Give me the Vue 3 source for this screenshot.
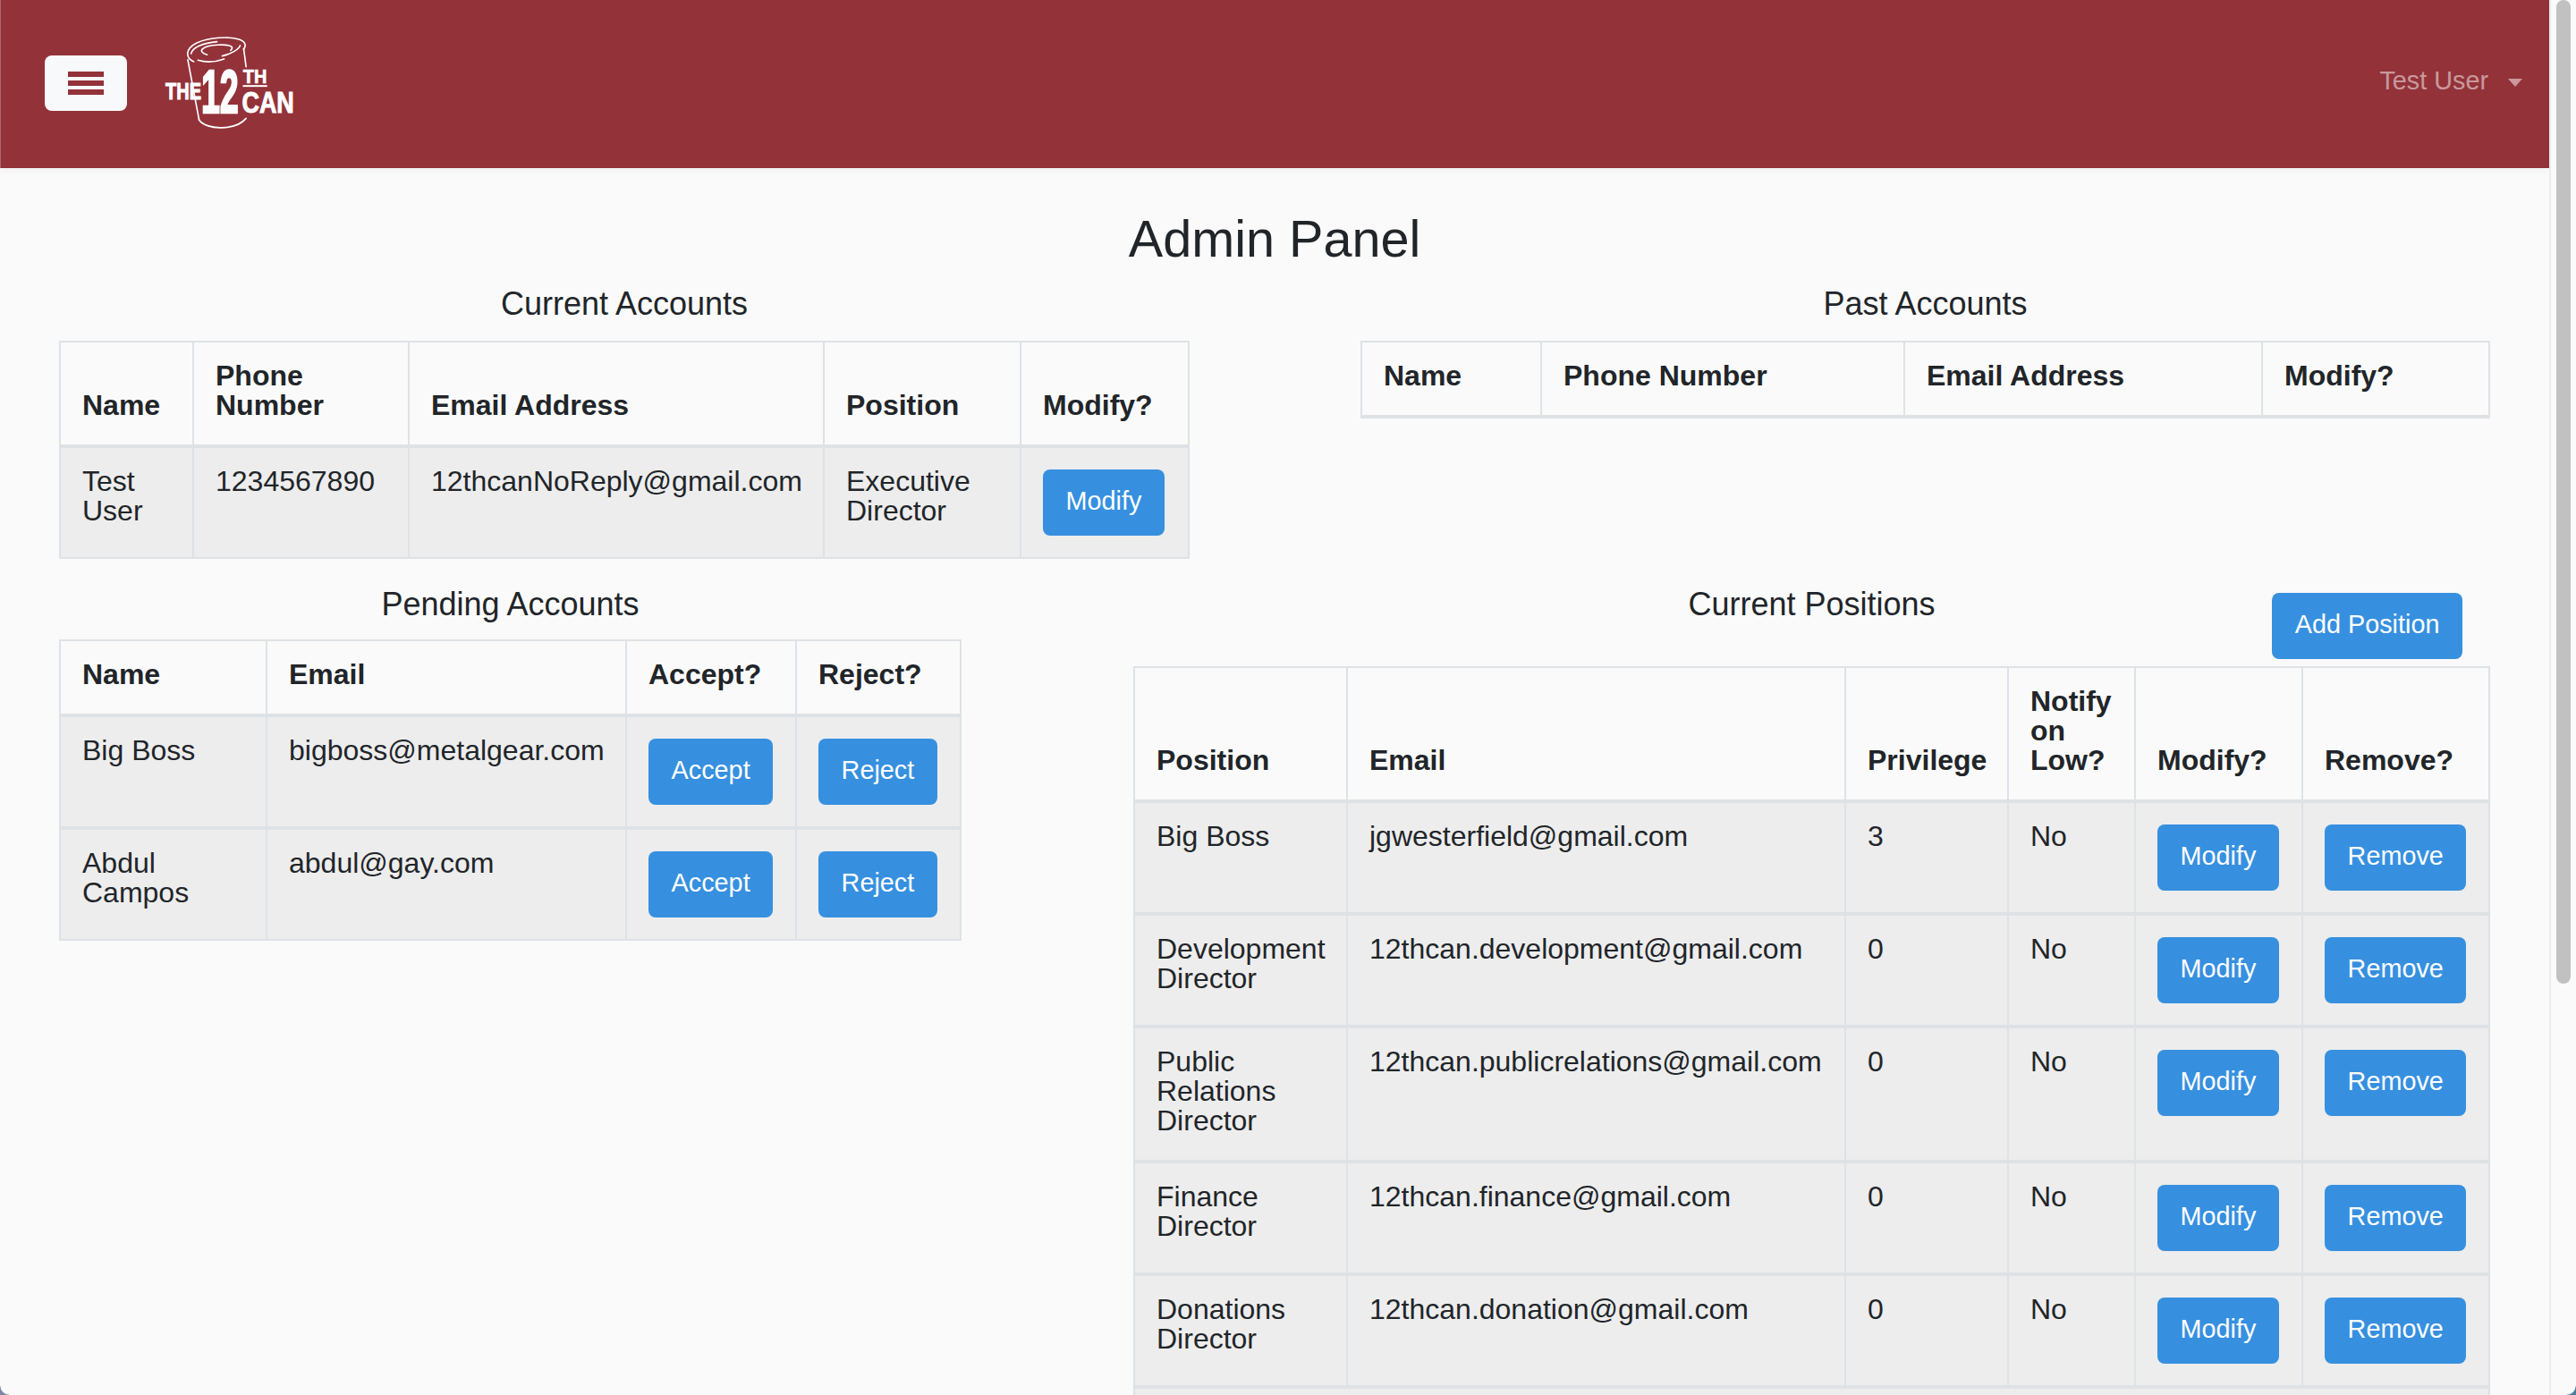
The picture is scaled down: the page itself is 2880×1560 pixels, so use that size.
<script setup>
const current = { cols: [149, 241, 464, 220, 188] }
const past = { cols: [201, 406, 400, 254] }
const pending = {
  cols: [231, 402, 190, 184],
  rows: [
    { name: 'Big Boss', email: 'bigboss@metalgear.com' },
    { name: 'Abdul Campos', email: 'abdul@gay.com' },
  ],
}
const positions = {
  cols: [238, 557, 182, 142, 187, 209],
  rows: [
    { name: 'Big Boss', email: 'jgwesterfield@gmail.com', privilege: 3 },
    { name: 'Development Director', email: '12thcan.development@gmail.com', privilege: 0 },
    { name: 'Public Relations Director', email: '12thcan.publicrelations@gmail.com', privilege: 0 },
    { name: 'Finance Director', email: '12thcan.finance@gmail.com', privilege: 0 },
    { name: 'Donations Director', email: '12thcan.donation@gmail.com', privilege: 0 },
  ],
}
</script>

<template>
  <div class="page">
    <div class="content">
      <header class="topbar">
        <button class="menu-btn" type="button">
          <span></span>
          <span></span>
          <span></span>
        </button>
        <svg class="logo" viewBox="540 110 460 340">
          <g fill="none" stroke="#fff" stroke-width="5" stroke-linecap="round">
            <path d="M650 209C622 197 620 166 660 146C700 128 770 122 805 135C826 144 826 156 818 168" />
            <path d="M641 182C646 162 680 146 728 142" />
            <path d="M695 186C660 176 676 156 730 153C766 151 790 156 774 171" />
            <path d="M664 204C700 215 730 208 752 200" />
            <path d="M746 190C772 184 800 170 806 155" />
            <path d="M630 203L668 405" />
            <path d="M818 165L826 226" />
            <path d="M668 405C690 440 790 442 826 400" />
          </g>
          <g class="logo-text">
            <text transform="translate(555 337) scale(.79 1)" font-size="76" stroke-width="3">THE</text>
            <text transform="translate(675 382) scale(.545 1)" font-size="208" stroke-width="7">12</text>
            <text transform="translate(816 282) scale(.94 1)" font-size="64" stroke-width="2">TH</text>
            <text transform="translate(812 382) scale(.81 1)" font-size="100" stroke-width="3">CAN</text>
          </g>
          <rect x="815" y="288" width="82" height="6" fill="#fff" />
        </svg>
        <div class="user">
          <span>Test User</span>
          <i class="caret"></i>
        </div>
      </header>

      <main class="main">
        <h1 class="title">Admin Panel</h1>

        <div class="row">
          <section>
            <h3 class="heading">Current Accounts</h3>
            <table class="grid">
              <colgroup>
                <col v-for="w in current.cols" :style="{ width: w + 'px' }" />
              </colgroup>
              <thead>
                <tr>
                  <th>Name</th>
                  <th>Phone Number</th>
                  <th>Email Address</th>
                  <th>Position</th>
                  <th>Modify?</th>
                </tr>
              </thead>
              <tbody>
                <tr>
                  <td>Test User</td>
                  <td>1234567890</td>
                  <td>12thcanNoReply@gmail.com</td>
                  <td>Executive Director</td>
                  <td class="action"><button class="btn" type="button">Modify</button></td>
                </tr>
              </tbody>
            </table>
          </section>

          <section>
            <h3 class="heading">Past Accounts</h3>
            <table class="grid">
              <colgroup>
                <col v-for="w in past.cols" :style="{ width: w + 'px' }" />
              </colgroup>
              <thead>
                <tr>
                  <th>Name</th>
                  <th>Phone Number</th>
                  <th>Email Address</th>
                  <th>Modify?</th>
                </tr>
              </thead>
            </table>
          </section>
        </div>

        <div class="row second">
          <section>
            <h3 class="heading">Pending Accounts</h3>
            <table class="grid">
              <colgroup>
                <col v-for="w in pending.cols" :style="{ width: w + 'px' }" />
              </colgroup>
              <thead>
                <tr>
                  <th>Name</th>
                  <th>Email</th>
                  <th>Accept?</th>
                  <th>Reject?</th>
                </tr>
              </thead>
              <tbody>
                <tr v-for="row in pending.rows" :key="row.email">
                  <td>{{ row.name }}</td>
                  <td>{{ row.email }}</td>
                  <td class="action"><button class="btn" type="button">Accept</button></td>
                  <td class="action"><button class="btn" type="button">Reject</button></td>
                </tr>
              </tbody>
            </table>
          </section>

          <section>
            <div class="pos-head">
              <span></span>
              <h3 class="heading flush">Current Positions</h3>
              <button class="btn add" type="button">Add Position</button>
            </div>
            <table class="grid">
              <colgroup>
                <col v-for="w in positions.cols" :style="{ width: w + 'px' }" />
              </colgroup>
              <thead>
                <tr>
                  <th>Position</th>
                  <th>Email</th>
                  <th>Privilege</th>
                  <th>Notify on Low?</th>
                  <th>Modify?</th>
                  <th>Remove?</th>
                </tr>
              </thead>
              <tbody>
                <tr v-for="row in positions.rows" :key="row.email">
                  <td>{{ row.name }}</td>
                  <td>{{ row.email }}</td>
                  <td>{{ row.privilege }}</td>
                  <td>No</td>
                  <td class="action"><button class="btn" type="button">Modify</button></td>
                  <td class="action"><button class="btn" type="button">Remove</button></td>
                </tr>
                <tr>
                  <td class="filler" colspan="6"></td>
                </tr>
              </tbody>
            </table>
          </section>
        </div>
      </main>
    </div>

    <aside class="scrollbar">
      <div class="thumb"></div>
    </aside>

    <i class="corner left"></i>
    <i class="corner right"></i>
  </div>
</template>

<style>
html,
body {
  margin: 0;
  overflow: hidden;
  background: #fafafa;
}
</style>

<style scoped>
.page {
  position: relative;
  display: flex;
  width: 2880px;
  height: 1560px;
  overflow: hidden;
  background: #fafafa;
  color: #212529;
  font-family: "Liberation Sans", Arial, sans-serif;
  font-size: 32px;
  line-height: 33px;
}

.content {
  width: 2850px;
  flex: none;
}

.topbar {
  display: flex;
  align-items: center;
  height: 188px;
  padding: 0 30px 0 49px;
  border-left: 1px solid #aa666b;
  box-sizing: border-box;
  background: #933239;
  box-shadow: 0 3px 8px rgba(0, 0, 0, 0.04);
}

.menu-btn {
  display: flex;
  flex-direction: column;
  gap: 4px;
  align-items: center;
  justify-content: center;
  width: 92px;
  height: 62px;
  margin-top: -2px;
  padding: 0;
  border: 0;
  border-radius: 8px;
  background: #f8f9fa;
}

.menu-btn span {
  display: block;
  width: 40px;
  height: 6px;
  background: #933239;
}

.logo {
  width: 153px;
  height: 113px;
  margin: -4px 0 0 38px;
  overflow: visible;
}

.logo-text {
  fill: #fff;
  stroke: #fff;
  font-family: "Liberation Sans", Arial, sans-serif;
  font-weight: 700;
}

.user {
  display: flex;
  align-items: center;
  margin-left: auto;
  margin-top: -8px;
  color: rgba(255, 255, 255, 0.5);
  font-size: 28.8px;
}

.caret {
  width: 0;
  height: 0;
  margin: 4px 0 0 22px;
  border-top: 9px solid rgba(255, 255, 255, 0.5);
  border-left: 8px solid transparent;
  border-right: 8px solid transparent;
}

.main {
  padding: 0 66px;
}

.title {
  margin: 45px 0 15px;
  font-size: 57.6px;
  font-weight: 400;
  line-height: 69px;
  text-align: center;
}

.row {
  display: flex;
  justify-content: space-between;
  align-items: flex-start;
}

.second {
  margin-top: 26px;
}

.heading {
  margin: 0 0 18px;
  font-size: 36px;
  font-weight: 400;
  line-height: 46px;
  text-align: center;
}

.second .heading {
  padding-top: 2px;
  margin-bottom: 16px;
}

.second .heading.flush {
  margin: 0;
  white-space: nowrap;
}

.pos-head {
  display: grid;
  grid-template-columns: 1fr auto 1fr;
  align-items: start;
}

.add {
  justify-self: end;
  margin: 12px 31px 8px 0;
}

.grid {
  border-collapse: collapse;
  table-layout: fixed;
  width: 1px;
}

.grid th,
.grid td {
  padding: 21px 24px 27px;
  border: 2px solid #dee2e6;
  text-align: left;
}

.grid th {
  border-bottom-width: 4px;
  font-weight: 700;
  vertical-align: bottom;
}

.grid td {
  vertical-align: top;
  background: #ededed;
}

.grid tbody tr + tr td {
  border-top-width: 4px;
}

.grid td.action {
  padding: 24px;
  white-space: nowrap;
}

.grid td.filler {
  height: 100px;
}

.btn {
  display: inline-flex;
  align-items: center;
  height: 74px;
  padding: 0 25.6px 4px;
  border: 0;
  border-radius: 8px;
  box-sizing: border-box;
  vertical-align: top;
  background: #3690df;
  color: #fff;
  font-family: inherit;
  font-size: 28.8px;
  line-height: 33px;
}

.scrollbar {
  width: 30px;
  height: 1560px;
  flex: none;
  padding-left: 6px;
  border-left: 2px solid #ececec;
  box-sizing: border-box;
  background: #fafafa;
}

.thumb {
  width: 16px;
  height: 1100px;
  border-radius: 8px;
  background: #c1c1c1;
}

.corner {
  position: absolute;
  bottom: 0;
  width: 10px;
  height: 10px;
}

.corner.left {
  left: 0;
  background: radial-gradient(circle at 100% 0, transparent 9px, #7f86a6 10px);
}

.corner.right {
  right: 0;
  background: radial-gradient(circle at 0 0, transparent 9px, #4a7f9f 10px);
}
</style>
